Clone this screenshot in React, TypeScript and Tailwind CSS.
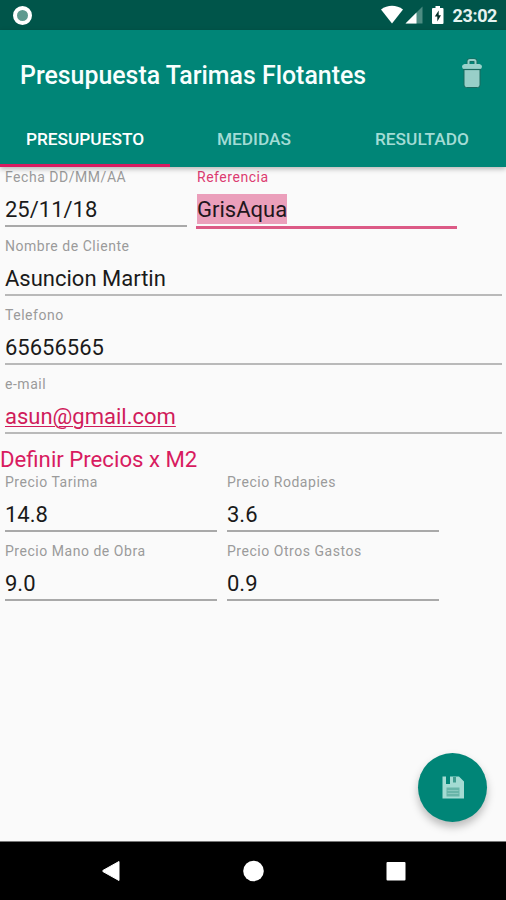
import React from "react";

type FieldProps = {
  label: string;
  value: string;
  className?: string;
  tone?: "normal" | "active" | "link";
  thick?: boolean;
};

function Field({ label, value, className = "", tone = "normal", thick = false }: FieldProps) {
  const active = tone === "active";
  return (
    <label className={`flex h-[69px] flex-col items-start ${className}`}>
      <span
        className={`h-5 text-[14px] leading-5 tracking-[0.53px] whitespace-nowrap ${
          active ? "pl-px text-[#dc3c71]" : "text-[#9b9b9b]"
        }`}
      >
        {label}
      </span>
      <span
        className={`mt-[7px] h-[30px] text-[22px] leading-[32px] whitespace-nowrap ${
          active
            ? "ml-px bg-[#eb9fbb] text-[#22161b]"
            : tone === "link"
              ? "text-[#d01c5b] underline decoration-1 underline-offset-2"
              : "text-[#1a1a1a]"
        }`}
      >
        {value}
      </span>
      <span
        className={`w-full ${
          active
            ? "mt-[2px] h-[3px] bg-[#dc5a86]"
            : thick
              ? "mt-px h-[2px] bg-[#b9b9b9]"
              : "mt-px h-[2px] bg-[#a9a9a9]"
        }`}
      />
    </label>
  );
}

function StatusBar() {
  return (
    <div className="flex h-[30px] items-center bg-[#00554a] pr-[9px] pl-[13px]">
      <div className="size-[19px] rounded-full border-4 border-white bg-[#5e9a8f]" />
      <svg className="ml-auto h-[20px] w-[66px]" viewBox="0 0 66 20">
        <path d="M0 4.5C6.5-.5 15.500-.5 22 4.500L11 18.500Z" fill="#fff" />
        <path d="M41.500 1.500V18.500H24.500Z" fill="#4d8c82" />
        <path d="M35.500 7.500V18.500H24.500Z" fill="#fff" />
        <path d="M54.500 1h4.500v2h2.500q1 0 1 1v14q0 1-1 1H52q-1 0-1-1V4q0-1 1-1h2.500z" fill="#fff" />
        <path d="M57.700 5.500L53.800 11.500h2.500v5l3.700-6.300h-2.300z" fill="#062e28" />
      </svg>
      <span className="ml-[6px] pt-[2px] text-[18px] leading-5 font-bold tracking-[-0.4px] text-[#e6f3f0]">23:02</span>
    </div>
  );
}

function TrashIcon() {
  return (
    <svg className="h-[32px] w-[24px]" viewBox="0 0 24 32">
      <path
        d="M4 11.500H20V27Q20 29.500 17.500 29.500H6.500Q4 29.500 4 27Z"
        fill="#98cfc8"
        stroke="#1b6a5f"
        strokeWidth="1"
      />
      <path d="M8.500 6V3.500Q8.500 2 10 2h4q1.500 0 1.500 1.500V6" fill="none" stroke="#1b6a5f" strokeWidth="3.600" />
      <path d="M8.500 6V3.500Q8.500 2 10 2h4q1.500 0 1.500 1.500V6" fill="none" stroke="#98cfc8" strokeWidth="2" />
      <path d="M2 8.500Q2 6.500 4.500 6h15Q22 6.500 22 8.500q0 2-2 3H4q-2-1-2-3z" fill="#9ad2cb" />
      <path d="M3 11.500H21" stroke="#1b6a5f" strokeWidth="1.200" />
    </svg>
  );
}

export default function App() {
  return (
    <div className="flex h-[900px] w-[506px] flex-col overflow-hidden bg-[#fafafa] font-['Roboto','Liberation_Sans',sans-serif]">
      <StatusBar />
      <header className="z-10 flex h-[137px] shrink-0 flex-col bg-[#008577] shadow-[0_2px_5px_rgba(0,0,0,0.28)]">
        <div className="flex h-[83px] items-center justify-between pt-[8px] pr-[22px] pl-[20px]">
          <h1 className="text-[24.900px] leading-8 font-medium whitespace-nowrap text-[#f8fffe]">
            Presupuesta Tarimas Flotantes
          </h1>
          <div className="-mt-[4px]">
            <TrashIcon />
          </div>
        </div>
        <nav className="grid h-[54px] grid-cols-[170px_168px_168px] text-center text-[17.300px] font-medium">
          <span className="border-b-[3px] border-[#d81b60] pt-[14px] leading-6 text-white">PRESUPUESTO</span>
          <span className="pt-[14px] leading-6 text-[#a3dcd5]">MEDIDAS</span>
          <span className="pt-[14px] leading-6 text-[#a3dcd5]">RESULTADO</span>
        </nav>
      </header>

      <main className="flex flex-1 flex-col">
        <div className="flex gap-[9px] pl-[5px]">
          <Field label="Fecha DD/MM/AA" value="25/11/18" className="w-[182px]" />
          <Field label="Referencia" value="GrisAqua" tone="active" className="w-[261px]" />
        </div>
        <div className="flex flex-col pr-[4px] pl-[5px]">
          <Field label="Nombre de Cliente" value="Asuncion Martin" thick />
          <Field label="Telefono" value="65656565" thick />
          <Field label="e-mail" value="asun@gmail.com" tone="link" thick />
        </div>
        <h2 className="h-[29px] text-[22.200px] leading-[32px] text-[#d81b60]">Definir Precios x M2</h2>
        <div className="grid grid-cols-[212px_212px] gap-x-[10px] pl-[5px]">
          <Field label="Precio Tarima" value="14.8" />
          <Field label="Precio Rodapies" value="3.6" />
          <Field label="Precio Mano de Obra" value="9.0" />
          <Field label="Precio Otros Gastos" value="0.9" />
        </div>
        <button className="mt-auto mr-[19px] mb-[19px] flex size-[69px] items-center justify-center self-end rounded-full bg-[#008577] shadow-[0_5px_9px_rgba(0,0,0,0.26)]">
          <svg className="h-[24px] w-[24px]" viewBox="0 0 24 24">
            <path d="M1.500 .5H5V8H9V.5H18L23 5.500V22.500H1.500z" fill="#a4dbd3" />
            <path d="M12 1h3v5.500h-3z" fill="#3f9c8f" />
            <path d="M5.500 11.500h13v9h-13z" fill="#69b5a9" />
            <path d="M6.500 14.500h11M6.500 17.500h11" stroke="#8ac9bf" />
          </svg>
        </button>
      </main>

      <footer className="flex h-[59px] shrink-0 border-t border-[#777] bg-black">
        <svg className="h-[58px] w-[506px]" viewBox="0 0 506 58">
          <path d="M119 19.500V38.500L103 29.600Q102 29 103 28.400Z" fill="#fff" stroke="#fff" strokeLinejoin="round" />
          <circle cx="253.500" cy="29" r="10.300" fill="#fff" />
          <rect x="386.500" y="20" width="19" height="18.500" rx="1" fill="#fff" />
        </svg>
      </footer>
    </div>
  );
}
